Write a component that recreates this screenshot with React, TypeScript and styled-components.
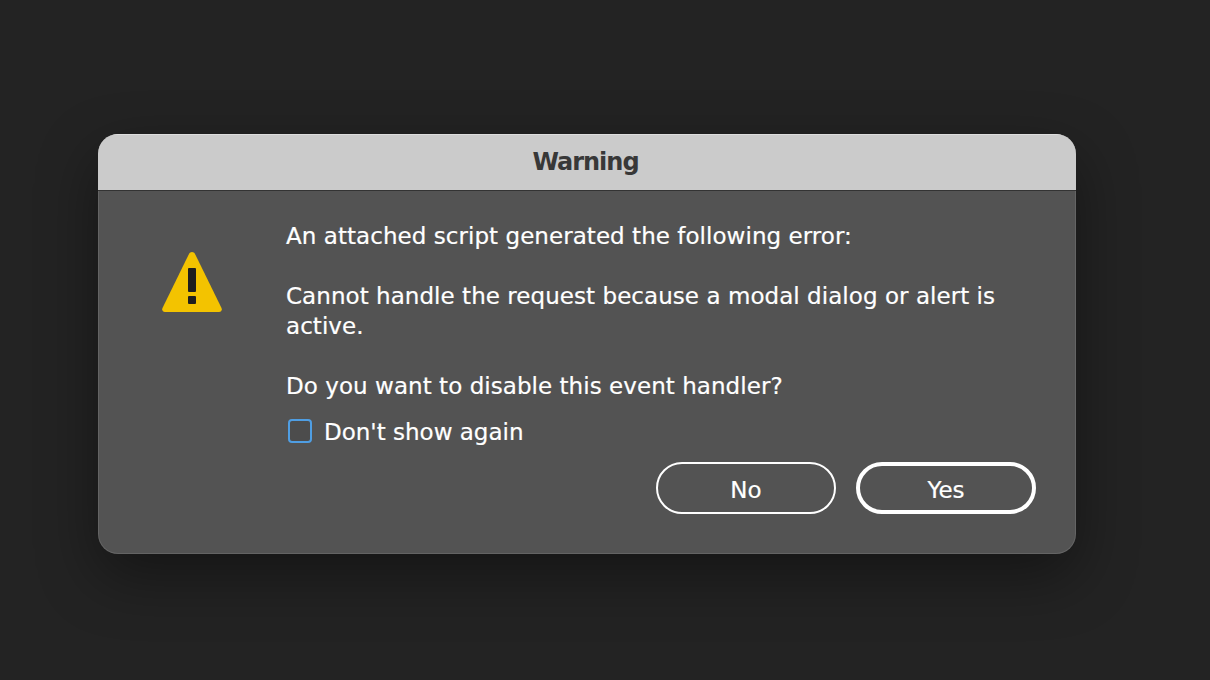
import styled, { createGlobalStyle } from "styled-components";

const Global = createGlobalStyle`
  html, body {
    margin: 0;
    background: #232323;
  }
`;

const Page = styled.div`
  width: 1210px;
  height: 680px;
  box-sizing: border-box;
  padding: 134px 134px 126px 98px;
  overflow: hidden;
  background: #232323;
  font-family: "DejaVu Sans", Verdana, sans-serif;
`;

const Dialog = styled.div`
  width: 978px;
  height: 420px;
  border-radius: 20px;
  overflow: hidden;
  background: #535353;
  display: flex;
  flex-direction: column;
  box-shadow: inset 0 0 0 1px rgba(255, 255, 255, 0.1), 0 22px 60px rgba(0, 0, 0, 0.4);
`;

const TitleBar = styled.div`
  height: 57px;
  flex: none;
  box-sizing: border-box;
  padding: 0 3px 2px 0;
  background: #cbcbcb;
  border-top: 1px solid #dedede;
  border-bottom: 1px solid #333;
  color: #383838;
  display: flex;
  align-items: center;
  justify-content: center;
  font-size: 24px;
  font-weight: 700;
  letter-spacing: -1px;
`;

const Body = styled.div`
  flex: 1;
  display: grid;
  grid-template-columns: 188px 1fr;
  padding: 30px 40px 0 0;
`;

const IconCell = styled.div`
  padding: 31px 0 0 64px;
`;

const Content = styled.div`
  display: flex;
  flex-direction: column;
`;

const Message = styled.p`
  margin: 0 0 30px;
  color: #fff;
  font-size: 23px;
  line-height: 30px;
  letter-spacing: 0.05px;
  -webkit-text-stroke: 0.2px #fff;
`;

const CheckRow = styled.label`
  display: flex;
  align-items: center;
  gap: 12px;
  margin: -15px 0 0 2px;
  height: 30px;
  color: #fff;
  font-size: 23px;
  -webkit-text-stroke: 0.2px #fff;
`;

const CheckText = styled.span`
  padding-top: 2px;
`;

const Box = styled.span`
  width: 24px;
  height: 24px;
  box-sizing: border-box;
  border: 2px solid #4f9ee3;
  border-radius: 4px;
  background: #4c4c4c;
`;

const Actions = styled.div`
  display: flex;
  justify-content: flex-end;
  gap: 20px;
  margin-top: 16px;
`;

const Button = styled.button<{ $primary?: boolean }>`
  width: 180px;
  height: 52px;
  box-sizing: border-box;
  border-radius: 26px;
  background: transparent;
  color: #fff;
  border: ${({ $primary }) => ($primary ? 4 : 2)}px solid #fff;
  font: 23px "DejaVu Sans", Verdana, sans-serif;
  -webkit-text-stroke: 0.2px #fff;
  padding: 4px 0 0;
`;

function WarningIcon() {
  return (
    <svg width="60" height="60" viewBox="0 0 60 60">
      <path
        d="M30 0c1.300 0 2.400.7 3 1.900l26.500 54c.9 1.900-.3 4.100-2.400 4.100H2.900C.8 60-.4 57.800.5 55.900L27 1.900C27.600.7 28.700 0 30 0z"
        fill="#f3c300"
      />
      <rect x="26" y="16" width="8" height="24" rx="1" fill="#1e1e1e" />
      <rect x="26" y="44" width="8" height="8" rx="1" fill="#1e1e1e" />
    </svg>
  );
}

export default function App() {
  return (
    <Page>
      <Global />
      <Dialog>
        <TitleBar>Warning</TitleBar>
        <Body>
          <IconCell>
            <WarningIcon />
          </IconCell>
          <Content>
            <Message>An attached script generated the following error:</Message>
            <Message>Cannot handle the request because a modal dialog or alert is active.</Message>
            <Message>Do you want to disable this event handler?</Message>
            <CheckRow>
              <Box />
              <CheckText>Don't show again</CheckText>
            </CheckRow>
            <Actions>
              <Button>No</Button>
              <Button $primary>Yes</Button>
            </Actions>
          </Content>
        </Body>
      </Dialog>
    </Page>
  );
}
